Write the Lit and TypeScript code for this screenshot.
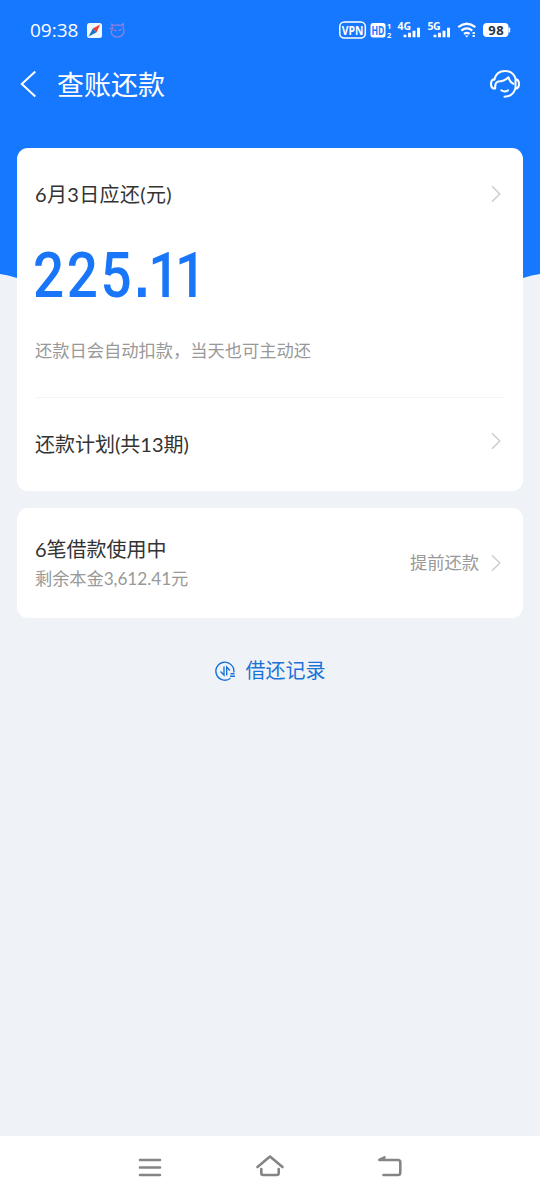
import { LitElement, html, svg, css } from "lit";
import { customElement } from "lit/decorators.js";

const chevron = html`<svg class="chev" width="10" height="18" viewBox="0 0 10 18" fill="none" stroke="#ccc" stroke-width="1.4">
  <path d="M1 1.3 8.8 9 1 16.700" />
</svg>`;

const bars = svg`<path d="M1.5 15.3v2.4M6 13.3v4.4M10.500 11.300v6.400M15 8.300v9.400" />`;

@customElement("app-root")
export class AppRoot extends LitElement {
  static styles = css`
    :host {
      display: flex;
      flex-direction: column;
      height: 1199px;
      background: #eff3f8;
      color: #333;
      font-family: Lato, "Noto Sans CJK SC", sans-serif;
    }
    svg { display: block; flex: none; }
    .hero { background: #1677ff; height: 274px; color: #fff; }
    .curve { width: 540px; height: 18px; }
    .status {
      display: flex;
      align-items: center;
      height: 60px;
      padding: 0 30px;
      box-sizing: border-box;
    }
    .time {
      font: 400 19px/24px "Open Sans", sans-serif;
      width: 56px;
      white-space: nowrap;
    }
    .cat { margin-left: 6px; }
    .signals { margin-left: auto; margin-right: -1px; }
    .lat { font-family: "Open Sans", sans-serif; font-weight: 700; }
    .nav {
      display: flex;
      align-items: center;
      height: 48px;
      padding: 0 19px 0 20px;
    }
    .title { font-size: 27px; line-height: 40px; margin-left: 20px; padding-top: 2px; flex: 1; }
    .content { margin-top: -144px; padding: 0 17px; flex: 1; }
    .card { background: #fff; border-radius: 11px; box-sizing: border-box; padding: 0 18px; }
    .bill { height: 343px; }
    .row { display: flex; align-items: center; justify-content: space-between; padding-right: 4px; }
    .label { font-size: 20px; line-height: 30px; }
    .due { padding-top: 31px; }
    .due .label { letter-spacing: 0.35px; }
    .amount {
      font: 500 63px/76px Roboto, sans-serif;
      color: #1a76f8;
      margin-top: 28px;
      margin-bottom: -1px;
      margin-left: -2px;
      letter-spacing: 3px;
      white-space: nowrap;
      transform: scaleX(0.87);
      transform-origin: 0 0;
    }
    .dot { font-family: "Liberation Sans", sans-serif; font-weight: 700; letter-spacing: -1.500px; }
    .one { letter-spacing: -5px; }
    .note { font-size: 17.25px; line-height: 26px; color: #999; margin-top: 25px; }
    .rule { height: 1px; background: #f5f5f5; margin-top: 33px; }
    .plan { margin-top: 31px; }
    .plan .chev { margin-top: -7px; }
    .loan { height: 110px; margin-top: 17px; display: flex; flex-direction: column; justify-content: center; }
    .sub { font-size: 17.25px; line-height: 26px; color: #999; }
    .loan .label { margin-top: -3px; line-height: 32px; }
    .row .below { padding-top: 1px; margin-bottom: -1px; letter-spacing: -0.080px; }
    .early { display: flex; align-items: center; gap: 12px; }
    .records {
      display: flex;
      align-items: center;
      justify-content: center;
      gap: 10px;
      margin-top: 37px;
      font-size: 20px;
      line-height: 30px;
      color: #1b73d6;
    }
    .records svg { margin-top: 2px; }
    .system {
      height: 63px;
      background: #fff;
      display: flex;
      justify-content: center;
      align-items: center;
      gap: 92px;
    }
  `;

  render() {
    return html`
      <div class="hero">
        <div class="status">
          <span class="time">09:38</span>
          <svg width="17" height="17" viewBox="0 0 17 17">
            <rect x="1" y="1" width="15" height="15" rx="2.500" fill="#eefaff" />
            <path d="M14.200 2.500 10.600 10.300 6.800 6.500Z" fill="#e8432e" />
            <path d="M2.600 14.500 6.800 6.500 10.600 10.300Z" fill="#1774c9" />
          </svg>
          <svg class="cat" width="17" height="17" viewBox="0 0 17 17" fill="none" stroke="#8f80e0" stroke-width="1.300" stroke-linecap="round" stroke-linejoin="round">
            <path d="M3.500 5 2.500 2 6 3.500Q9 2.500 11.500 3.500L14.500 1.500 14 5.500Q16 9 14 12.500 11.500 15.500 7 15 2.500 14 2 9.500L3.500 8" />
            <path d="M1 6.500h3M5.500 8l1.500.7M10 8.500l2-1" />
          </svg>
          <svg class="signals" width="173" height="24" viewBox="0 0 173 24" fill="#fff">
            <rect x="1.800" y="4" width="25.500" height="16" rx="4.500" fill="none" stroke="#fff" stroke-width="1.500" />
            <text class="lat" x="3.800" y="17" font-size="13" textLength="21.500" lengthAdjust="spacingAndGlyphs">VPN</text>
            <rect x="32.500" y="5" width="15" height="14.500" rx="2.500" />
            <text class="lat" x="33.500" y="16.500" font-size="12" fill="#1677ff" textLength="13" lengthAdjust="spacingAndGlyphs">HD</text>
            <text class="lat" x="49" y="10.500" font-size="7.500">1</text>
            <text class="lat" x="49" y="20" font-size="7.500">2</text>
            <text class="lat" x="59.500" y="12" font-size="10.500" textLength="13.500">4G</text>
            <g transform="translate(65.500 1.500)" stroke="#fff" stroke-width="2.900" fill="none">${bars}</g>
            <text class="lat" x="89.500" y="12" font-size="10.500" textLength="13">5G</text>
            <g transform="translate(95.500 1.500)" stroke="#fff" stroke-width="2.900" fill="none">${bars}</g>
            <g fill="none" stroke="#fff" stroke-width="2.200">
              <path d="M120.300 9.200Q128.800 2.300 137.300 9.200M123.300 12.600Q128.800 8.300 134.300 12.600" />
              <path d="M126 15.900Q128.800 13.900 131.600 15.900" />
            </g>
            <path d="M127 17.500h3.600l-1.800 2zM134.600 14h2.200v2h-2.200zM134.600 17h2.200v2h-2.200z" />
            <rect x="145" y="5" width="25.500" height="14" rx="4" />
            <rect x="170.500" y="9.500" width="1.700" height="5" rx=".8" />
            <text class="lat" x="150.300" y="16.700" font-size="13" fill="#26364c" textLength="15.500">98</text>
          </svg>
        </div>
        <div class="nav">
          <svg width="17" height="28" viewBox="0 0 17 28" fill="none" stroke="#fff" stroke-width="2">
            <path d="M15.300 1.500 1.800 14l13.500 12.500" />
          </svg>
          <div class="title">查账还款</div>
          <svg width="32" height="30" viewBox="0 0 32 30" fill="none" stroke="#fff" stroke-width="2" stroke-linecap="round" stroke-linejoin="round">
            <path d="M5.200 10.500Q7.500 2 16 2T26.800 10.500" />
            <path d="M5.500 10.500H4.200Q2 11.500 2 15T4.200 19.500H6.200V18Q6 13.500 9 12.600 15 12.500 19.500 8.300 20.500 13 24.500 14.800" />
            <path d="M26.700 10.500h1.100Q30 11.500 30 15t-2.200 4.500h-1.300V11.500M26.300 19.500Q24 27.500 15.500 27.800" />
            <path d="M12.300 21.300Q15.500 23.500 19 21.300" />
          </svg>
        </div>
      </div>
      <svg class="curve" viewBox="0 0 540 18">
        <path d="M0 0Q8 1 17 4 130 18 270 18T523 4Q532 1 540 0Z" fill="#1677ff" />
      </svg>
      <div class="content">
        <div class="card bill">
          <div class="row due"><span class="label">6月3日应还(元)</span>${chevron}</div>
          <div class="amount">225<span class="dot">.</span><span class="one">1</span>1</div>
          <div class="note">还款日会自动扣款，当天也可主动还</div>
          <div class="rule"></div>
          <div class="row plan"><span class="label">还款计划(共13期)</span>${chevron}</div>
        </div>
        <div class="card loan">
          <div class="row">
            <div>
              <div class="label">6笔借款使用中</div>
              <div class="sub below">剩余本金3,612.41元</div>
            </div>
            <div class="early"><span class="sub">提前还款</span>${chevron}</div>
          </div>
        </div>
        <div class="records">
          <svg width="21" height="20" viewBox="0 0 21 20" fill="none" stroke="#1b73d6" stroke-width="1.400">
            <path d="M18.800 11.500A9 9 0 1 0 15.500 17.200" />
            <path d="M5.500 10.500 9 14V5.500M15 9.500 11.700 6v8.500" />
            <path d="M15.500 12.800h4M15 15.300h5" />
          </svg>
          <span>借还记录</span>
        </div>
      </div>
      <div class="system">
        <svg width="28" height="28" viewBox="0 0 28 28" fill="none" stroke="#858585" stroke-width="2.600" stroke-linecap="round">
          <path d="M4 6h20M4 13.500h20M4 21h20" />
        </svg>
        <svg width="28" height="28" viewBox="0 0 28 28" fill="none" stroke="#858585" stroke-width="2.600" stroke-linecap="round" stroke-linejoin="round">
          <path d="M1.500 13 14 2.500 26.500 13M5.300 15v4q0 2 2 2h13.400q2 0 2-2v-4" />
        </svg>
        <svg width="28" height="28" viewBox="0 0 28 28" fill="none" stroke="#858585" stroke-width="2.600" stroke-linecap="round" stroke-linejoin="round">
          <path d="M8.500 3.300 3.300 6H22q2.300 0 2.300 2.300v10.400q0 2.300-2.300 2.300H7.500" />
        </svg>
      </div>
    `;
  }
}
